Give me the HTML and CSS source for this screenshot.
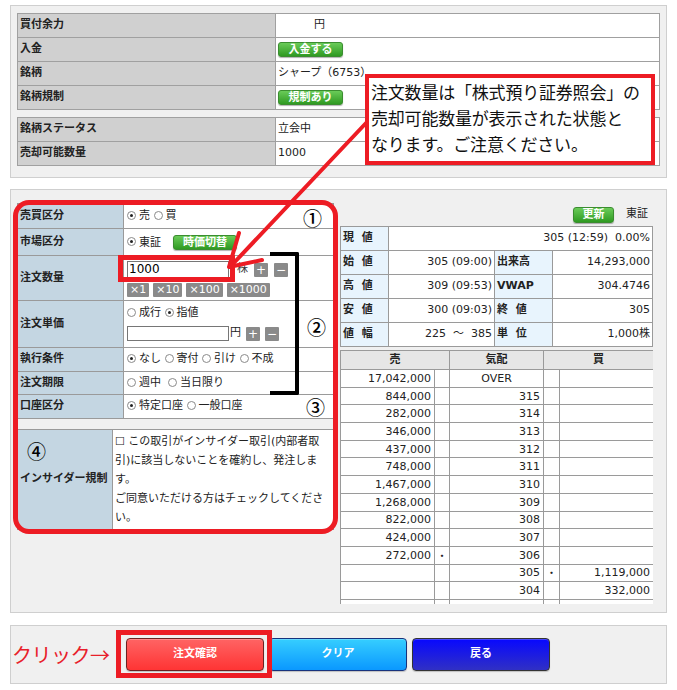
FILE: index.html
```html
<!DOCTYPE html>
<html lang="ja">
<head>
<meta charset="utf-8">
<title>注文入力</title>
<link rel="stylesheet" href="styles.css">
</head>
<body>
<div class="page">

  <section class="panel info">
    <table class="info-table">
      <colgroup><col class="c-label"><col></colgroup>
      <tr><th>買付余力</th><td><span class="yen">円</span></td></tr>
      <tr><th>入金</th><td><span class="gbtn w65">入金する</span></td></tr>
      <tr><th>銘柄</th><td>シャープ（6753）</td></tr>
      <tr><th>銘柄規制</th><td><span class="gbtn w65">規制あり</span></td></tr>
    </table>
    <table class="info-table second">
      <colgroup><col class="c-label"><col></colgroup>
      <tr><th>銘柄ステータス</th><td>立会中</td></tr>
      <tr><th>売却可能数量</th><td>1000</td></tr>
    </table>
  </section>

  <section class="panel trade">
    <div class="trade-left">
      <table class="form">
        <colgroup><col class="c-flabel"><col></colgroup>
        <tr class="r-side"><th>売買区分</th><td><span class="radio on"></span>売 <span class="radio"></span>買</td></tr>
        <tr class="r-market"><th>市場区分</th><td><span class="radio on"></span>東証<span class="gbtn jika">時価切替</span></td></tr>
        <tr class="r-qty"><th>注文数量</th><td class="stack">
          <div class="line">
            <span class="input qty">1000</span><span class="unit">株</span><span class="sbtn">+</span><span class="sbtn">−</span>
          </div>
          <div class="line mults">
            <span class="sbtn m">×1</span><span class="sbtn m">×10</span><span class="sbtn m">×100</span><span class="sbtn m">×1000</span>
          </div>
        </td></tr>
        <tr class="r-price"><th>注文単価</th><td class="stack price">
          <div class="text-line"><span class="radio"></span>成行 <span class="radio on"></span>指値</div>
          <div class="line">
            <span class="input prc"></span><span class="unit2">円</span><span class="sbtn">+</span><span class="sbtn">−</span>
          </div>
        </td></tr>
        <tr class="r-cond"><th>執行条件</th><td><span class="radio on"></span>なし <span class="radio"></span>寄付 <span class="radio"></span>引け <span class="radio"></span>不成</td></tr>
        <tr class="r-term"><th>注文期限</th><td><span class="radio"></span>週中 &nbsp;<span class="radio"></span>当日限り</td></tr>
        <tr class="r-acct"><th>口座区分</th><td><span class="radio on"></span>特定口座 <span class="radio"></span>一般口座</td></tr>
      </table>

      <table class="form insider">
        <colgroup><col class="c-ilabel"><col></colgroup>
        <tr><th>インサイダー規制</th><td>☐ この取引がインサイダー取引(内部者取<br>引)に該当しないことを確約し、発注しま<br>す。<br>ご同意いただける方はチェックしてくださ<br>い。</td></tr>
      </table>
    </div>

    <div class="trade-right">
      <div class="quote-head">
        <span class="gbtn upd">更新</span><span class="mkt">東証</span>
      </div>
      <table class="quote">
        <colgroup><col class="q1"><col class="q2"><col class="q3"><col class="q4"></colgroup>
        <tr><th>現&nbsp;&nbsp;値</th><td colspan="3" class="pre">305 (12:59)  0.00%</td></tr>
        <tr><th>始&nbsp;&nbsp;値</th><td>305 (09:00)</td><th>出来高</th><td>14,293,000</td></tr>
        <tr><th>高&nbsp;&nbsp;値</th><td>309 (09:53)</td><th>VWAP</th><td>304.4746</td></tr>
        <tr><th>安&nbsp;&nbsp;値</th><td>300 (09:03)</td><th>終&nbsp;&nbsp;値</th><td>305</td></tr>
        <tr><th>値&nbsp;&nbsp;幅</th><td class="pre">225  ～  385</td><th>単&nbsp;&nbsp;位</th><td>1,000株</td></tr>
      </table>

      <div class="book-wrap">
        <table class="book">
          <colgroup><col class="b-qty"><col class="b-mark"><col class="b-price"><col class="b-mark2"><col class="b-qty"></colgroup>
          <tr class="bh"><th colspan="2">売</th><th>気配</th><th colspan="2">買</th></tr>
          <tr><td>17,042,000</td><td></td><td class="c">OVER</td><td></td><td></td></tr>
          <tr><td>844,000</td><td></td><td>315</td><td></td><td></td></tr>
          <tr><td>282,000</td><td></td><td>314</td><td></td><td></td></tr>
          <tr><td>346,000</td><td></td><td>313</td><td></td><td></td></tr>
          <tr><td>437,000</td><td></td><td>312</td><td></td><td></td></tr>
          <tr><td>748,000</td><td></td><td>311</td><td></td><td></td></tr>
          <tr><td>1,467,000</td><td></td><td>310</td><td></td><td></td></tr>
          <tr><td>1,268,000</td><td></td><td>309</td><td></td><td></td></tr>
          <tr><td>822,000</td><td></td><td>308</td><td></td><td></td></tr>
          <tr><td>424,000</td><td></td><td>307</td><td></td><td></td></tr>
          <tr><td>272,000</td><td class="dot">・</td><td>306</td><td></td><td></td></tr>
          <tr><td></td><td></td><td>305</td><td class="dot">・</td><td>1,119,000</td></tr>
          <tr><td></td><td></td><td>304</td><td></td><td>332,000</td></tr>
          <tr><td></td><td></td><td></td><td></td><td></td></tr>
        </table>
      </div>
    </div>
  </section>

  <section class="panel actions">
    <span class="click-note">クリック→</span>
    <span class="btn confirm">注文確認</span>
    <span class="btn clear">クリア</span>
    <span class="btn back">戻る</span>
  </section>

  <!-- annotations drawn over the screen -->
  <div class="ann ring"></div>
  <div class="ann qty-hl"></div>
  <div class="ann bracket"></div>
  <div class="ann num n1">①</div>
  <div class="ann num n2">②</div>
  <div class="ann num n3">③</div>
  <div class="ann num n4">④</div>
  <div class="ann click-hl"></div>
  <svg class="ann arrow" width="677" height="690" viewBox="0 0 677 690">
    <g stroke="#ed1c24" stroke-width="4" stroke-linecap="round" stroke-linejoin="round" fill="none">
      <path d="M367 122 L230 267"/>
      <path d="M239 233 L229 267 L262 260"/>
    </g>
  </svg>
  <div class="ann callout">注文数量は「株式預り証券照会」の<br>売却可能数量が表示された状態と<br>なります。ご注意ください。</div>
</div>
</body>
</html>
```

FILE: styles.css
```css
* { box-sizing: border-box; }
html, body { margin: 0; padding: 0; background: #fff; }
body {
  font-family: "DejaVu Sans", "Noto Sans CJK JP", sans-serif;
  font-size: 11px;
  line-height: 1.3;
  color: #222;
}
.page { position: relative; width: 677px; height: 690px; padding-top: 5px; overflow: hidden; }

.panel { margin: 0 10px; background: #f0f0f0; border: 1px solid #cfcfcf; }

/* ---------- top info ---------- */
.info { padding: 7px 6px 11px; }
.info-table { width: 643px; border-collapse: collapse; table-layout: fixed; background: #fff; }
.info-table.second { margin-top: 7px; }
.info-table .c-label { width: 258px; }
.info-table tr { height: 24px; }
.info-table th, .info-table td { border: 1px solid #a0a0a0; padding: 0 2px; text-align: left; vertical-align: middle; }
.info-table th { background: #d0d0d0; font-weight: bold; }
.yen { margin-left: 36px; }

.gbtn {
  display: inline-block; height: 15px; line-height: 13px; text-align: center;
  color: #fff; font-weight: bold; font-size: 11px;
  background: linear-gradient(#6acb58, #2f9a22);
  border: 1px solid #3b8d30; border-radius: 3px;
  box-shadow: 0 1px 1px rgba(0,0,0,.3);
  vertical-align: middle;
}
.gbtn.w65 { width: 65px; }
.gbtn.jika { width: 64px; margin-left: 12px; }
.gbtn.upd { width: 41px; height: 16px; line-height: 14px; }

/* ---------- trade panel ---------- */
.trade { margin-top: 11px; display: flex; gap: 6px; padding: 13px 13px 8px 6px; }
.trade-left { width: 317px; }
.trade-right { width: 313px; }

.form { width: 317px; border-collapse: collapse; table-layout: fixed; background: #fff; }
.form .c-flabel { width: 106px; }
.form th, .form td { border: 1px solid #9a9a9a; padding: 0 3px; text-align: left; vertical-align: middle; }
.form th { background: #c4d6e2; font-weight: bold; padding-left: 2px; }
.form td { white-space: nowrap; }
.r-side { height: 25px; }
.r-market { height: 27px; }
.r-qty { height: 45px; }
.r-price { height: 47px; }
.r-cond { height: 24px; }
.r-term { height: 23px; }
.r-acct { height: 24px; }

.form td.stack { vertical-align: top; padding-top: 5px; }
.stack .line { display: flex; align-items: center; gap: 6px; }
.stack .line + .line { margin-top: 5px; }
.stack .line.mults { gap: 4px; }
.stack .text-line { height: 14px; line-height: 14px; }
.stack.price .line { margin-top: 6px; gap: 5px; }

.radio {
  display: inline-block; position: relative; width: 9px; height: 9px;
  border: 1px solid #8a8a8a; border-radius: 50%; background: #fff;
  vertical-align: -1px; margin-right: 3px;
}
.radio.on::after {
  content: ""; position: absolute; left: 2px; top: 2px; width: 3px; height: 3px;
  border-radius: 50%; background: #222;
}

.input { display: inline-block; background: #fff; border: 1px solid #767676; }
.input.qty { width: 102px; height: 17px; font-size: 12px; line-height: 15px; padding-left: 1px; color: #000; }
.input.prc { width: 102px; height: 15px; }
.unit { margin-left: 2px; color: #333; }
.unit2 { margin-left: -4px; }

.sbtn {
  display: inline-block; min-width: 14px; height: 14px; line-height: 14px; padding: 0 2px;
  background: #8a8a8a; color: #fff; text-align: center; font-size: 12px; border-radius: 1px;
}
.sbtn.m { font-size: 11px; padding: 0 3px; }

.insider { margin-top: 10px; }
.insider .c-ilabel { width: 95px; }
.insider tr { height: 100px; }
.insider th { vertical-align: middle; padding-top: 0; }
.insider td { vertical-align: middle; line-height: 19px; padding: 0 2px; }

/* ---------- quote ---------- */
.quote-head { height: 23px; display: flex; justify-content: flex-end; align-items: center; padding-right: 5px; }
.mkt { margin-left: 12px; }

.quote { width: 313px; border-collapse: collapse; table-layout: fixed; background: #fff; }
.quote .q1 { width: 48px; } .quote .q2 { width: 106px; } .quote .q3 { width: 58px; }
.quote tr { height: 24px; }
.quote th, .quote td { border: 1px solid #9a9a9a; padding: 0 2px; vertical-align: middle; white-space: nowrap; }
.quote th { background: #e8f4fd; text-align: left; font-weight: bold; }
.quote td { text-align: right; }
.pre { white-space: pre !important; }

.book-wrap { margin-top: 3px; height: 254px; overflow: hidden; }
.book { width: 313px; border-collapse: collapse; table-layout: fixed; background: #fff; }
.book .b-qty { width: 94px; } .book .b-mark { width: 15px; } .book .b-price { width: 94px; } .book .b-mark2 { width: 16px; }
.book tr { height: 17.7px; }
.book tr.bh { height: 19px; }
.book th { background: #e6e6e6; font-weight: bold; text-align: center; border: 1px solid #9a9a9a; }
.book td { border: 1px solid #9a9a9a; text-align: right; padding: 0 3px; white-space: nowrap; line-height: 15px; }
.book td.c { text-align: center; }
.book td.dot { text-align: center; padding: 0; font-family: "Noto Sans CJK JP", sans-serif; }

/* ---------- actions ---------- */
.actions { margin-top: 12px; height: 59px; display: flex; align-items: center; padding-left: 1px; }
.click-note {
  font-family: "Noto Sans CJK JP", sans-serif; font-size: 20px; line-height: 1;
  color: #e8202a; width: 114px; letter-spacing: -0.5px;
}
.btn {
  width: 138px; height: 33px; margin-right: 5px; border-radius: 4px;
  display: flex; align-items: center; justify-content: center;
  color: #fff; font-weight: bold; font-size: 11px;
  box-shadow: inset 0 1px 0 rgba(255,255,255,.25), 0 1px 1px rgba(0,0,0,.2);
}
.btn.confirm { background: linear-gradient(#ff6464, #ff3434); border: 1px solid #6e2020; }
.btn.clear { background: linear-gradient(#36ceff, #0a98ff); border: 1px solid #17327c; }
.btn.back { background: linear-gradient(#0808ff, #3030c4); border: 1px solid #333; }

/* ---------- annotations ---------- */
.ann { position: absolute; pointer-events: none; }
.ring { left: 13px; top: 200px; width: 325px; height: 334px; border: 5px solid #ed1c24; border-radius: 16px; }
.qty-hl { left: 118px; top: 255px; width: 117px; height: 27px; border: 5px solid #ed1c24; }
.bracket { left: 270px; top: 252px; width: 29px; height: 143px; border: 4px solid #000; border-left: 0; border-radius: 0 2px 2px 0; }
.num { font-family: "Noto Sans CJK JP", sans-serif; font-size: 19px; line-height: 1; color: #000; font-weight: 500; }
.n1 { left: 303px; top: 208px; }
.n2 { left: 307px; top: 317px; }
.n3 { left: 306px; top: 397px; }
.n4 { left: 27px; top: 441px; }
.click-hl { left: 116px; top: 630px; width: 156px; height: 48px; border: 5px solid #ed1c24; }
.arrow { left: 0; top: 0; }
.callout {
  left: 365px; top: 74px; width: 290px; height: 91px;
  border: 4px solid #ed1c24; background: #fff; color: #111;
  font-family: "Noto Sans CJK JP", sans-serif; font-size: 17px; line-height: 26px;
  padding: 1px 0 0 2px; white-space: nowrap; letter-spacing: -0.2px;
}
```
